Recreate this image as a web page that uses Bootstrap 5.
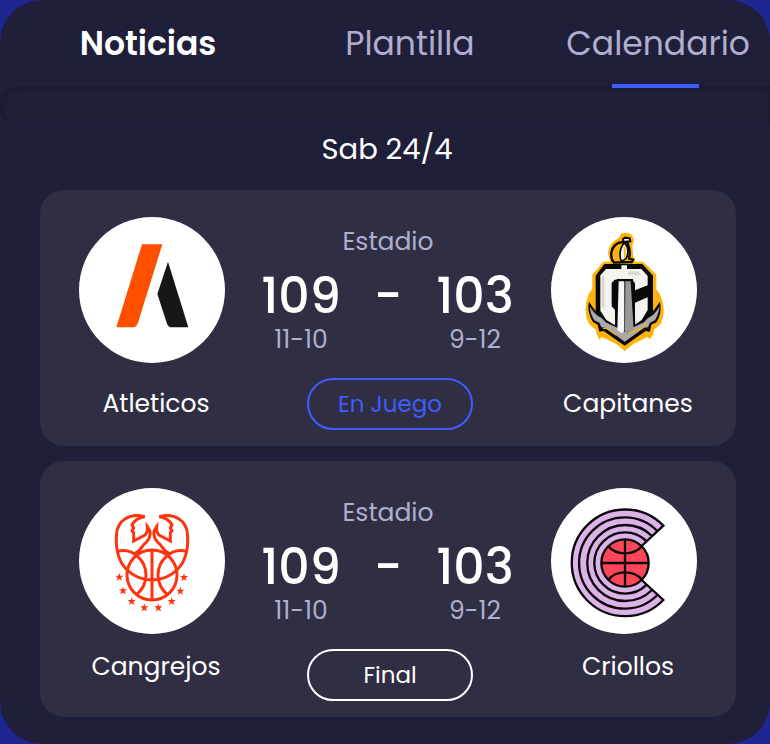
<!DOCTYPE html>
<html lang="es">
<head>
<meta charset="utf-8">
<meta name="viewport" content="width=device-width, initial-scale=1">
<title>Calendario</title>
<link rel="stylesheet" href="https://cdn.jsdelivr.net/npm/bootstrap@5.3.0/dist/css/bootstrap.min.css">
<style>
  body { background: #1f2692; font-family: Poppins, Inter, "Open Sans", sans-serif; color: #fff; }
  .panel { background: #201f3a; border-radius: 42px; min-height: 100vh; }
  .tabs { display: grid; grid-template-columns: 296fr 228fr 246fr; height: 86px; }
  .tab-link { position: relative; display: block; height: 88px; line-height: 87px; font-size: 33px; color: #b0aece; text-decoration: none; white-space: nowrap; }
  .tab-link:hover { color: #fff; }
  .tab-strong { font-weight: 600; color: #fff; }
  .tab-line::after { content: ""; position: absolute; left: 25%; right: 28%; bottom: 0; height: 4px; background: #3f5cff; }
  .tab-end { padding-right: 20px; }
  .strip { height: 40px; border-radius: 20px 0 0 20px; box-shadow: inset 0 3px 5px -1px #1a1930, inset 1px 0 3px #1c1b33; }
  .day { font-size: 29px; line-height: 40px; padding: 3px 0 21px 4px; }
  .games { display: grid; gap: 15px; padding: 0 34px 27px 40px; }
  .game { display: grid; grid-template-columns: 146px 1fr 146px; padding: 27px 39px 16px; background: #2f2e43; border-radius: 24px; }
  .crest { display: block; width: 146px; height: 146px; border-radius: 50%; background: #fff; }
  .team { font-size: 25px; line-height: 32px; margin-top: 25px; padding-left: 8px; white-space: nowrap; }
  .finished .team { margin-top: 17px; }
  .soft { color: #b0aece; font-size: 25px; line-height: 32px; }
  .venue { margin: 9px 0 10px; }
  .score { display: grid; grid-template-columns: repeat(3, 87px); justify-content: center; }
  .points { font-size: 49px; line-height: 56px; font-weight: 500; }
  .state { width: 166px; height: 52px; margin: 22px 0 0 4px; padding: 0; border: 2px solid #fff; border-radius: 26px; color: #fff; background: none; font-size: 23px; }
  .live { border-color: #3f5cff; color: #3f5cff; }
</style>
</head>
<body>
<div class="panel">
  <nav class="tabs text-center" aria-label="Secciones">
    <div class="d-flex justify-content-center"><a class="tab-link tab-strong" href="#noticias">Noticias</a></div>
    <div class="d-flex justify-content-center"><a class="tab-link" href="#plantilla">Plantilla</a></div>
    <div class="d-flex justify-content-end tab-end"><a class="tab-link tab-line" href="#calendario" aria-current="page">Calendario</a></div>
  </nav>
  <div class="strip"></div>
  <main id="calendario">
    <h1 class="day text-center fw-normal m-0">Sab 24/4</h1>
    <div class="games">
      <article class="game text-center">
        <div class="d-flex flex-column align-items-center">
          <svg class="crest" viewBox="13 21 438 438" role="img" aria-label="Atleticos">
            <path fill="#ff5000" d="M202 103H263L190 338Q185 352 173 352H125Z"/>
            <path fill="#171717" d="M280 155L341 352H292Q281 352 277 341L248 252Z"/>
          </svg>
          <div class="team">Atleticos</div>
        </div>
        <div class="d-flex flex-column align-items-center">
          <div class="soft venue">Estadio</div>
          <div class="score">
            <div class="points">109</div><div class="points">-</div><div class="points">103</div>
            <div class="soft">11-10</div><div></div><div class="soft">9-12</div>
          </div>
          <button type="button" class="state live">En Juego</button>
        </div>
        <div class="d-flex flex-column align-items-center">
          <svg class="crest" viewBox="18 21 438 438" role="img" aria-label="Capitanes">
            <path fill="#ffb30a" d="M229 70L249 68Q266 74 267 92L262 106L264 136L270 147L269 155H294L334 194V238L344 252Q361 288 354 320L347 342L327 359L325 373L315 388L307 381L264 403L239 423L215 403L171 381L163 389L155 373L153 360L133 343L125 326Q116 288 132 250L142 237V194L175 155H195L189 130Q191 98 221 85Z"/>
            <path fill="#080808" d="M178 162H292L324 197V304L345 275Q352 310 334 337L319 344L315 365L302 363L239 407L176 363L163 365L158 344L143 335Q125 303 132 275L152 304V197Z"/>
            <path fill="#ffb30a" stroke="#080808" stroke-width="7" d="M234 96Q205 98 199 128Q197 148 207 158L260 156L264 149L252 146Q258 121 247 98Z"/>
            <path fill="#f4f4ef" stroke="#080808" stroke-width="5" d="M237 99Q218 124 229 154Q252 146 248 118Q246 104 237 99Z"/>
            <path fill="#ffb30a" d="M237 106Q247 126 239 148Q235 124 237 106Z"/>
            <path fill="#f4f4ef" stroke="#080808" stroke-width="6" d="M234 87L240 83L254 85L256 94L236 96Z"/>
            <path fill="#f4f4ef" d="M229 166H246V182H229Z"/>
            <path fill="#f4f4ef" d="M183 177H289L308 198V226L270 241V220L261 209H209L200 219V289L210 300V346L184 330L166 302V196Z"/>
            <path fill="#f4f4ef" d="M270 278L308 262V300L290 330L270 344Z"/>
            <path fill="#d9d9d6" d="M249 184H280L290 196H249Z"/>
            <path fill="#d2d2cf" d="M171 202L178 194V296L171 289Z"/>
            <path fill="#080808" d="M215 207H264L272 363L239 388L209 363Z"/>
            <path fill="#aaa" d="M134 289Q149 315 171 325L182 337L218 354L240 366L260 354L297 337L308 325Q330 315 344 289Q341 314 330 331L315 338L309 352L298 353L239 395L181 353L169 352L163 338L148 331Q136 314 134 289Z"/>
            <path fill="#f6f6f6" d="M221 214H238V362L230 370L217 360Z"/>
            <path fill="#999" d="M241 214H257L266 358L246 374L240 364Z"/>
            <path fill="none" stroke="#ffb30a" stroke-width="4" d="M174 355L185 355L213 375M306 340Q285 359 252 371"/>
          </svg>
          <div class="team">Capitanes</div>
        </div>
      </article>

      <article class="game finished text-center">
        <div class="d-flex flex-column align-items-center">
          <svg class="crest" viewBox="13 17 438 438" role="img" aria-label="Cangrejos">
            <defs>
              <path id="star" fill="#ff330f" d="M0-12L3-4L12-4L5 2L8 11L0 6L-8 11L-5 2L-12-4L-3-4Z"/>
              <g id="claw">
                <path d="M160 265C133 242 123 205 125 160C127 113 166 91 210 103C190 106 179 113 172 128L177 137L172 145L177 151V176L211 158C219 151 219 142 218 132C230 147 229 164 215 180C199 190 201 207 179 214"/>
                <path d="M130 206C175 196 214 234 214 279Q213 313 187 336"/>
              </g>
            </defs>
            <g fill="none" stroke="#ff330f" stroke-width="9" stroke-linejoin="miter">
              <use href="#claw"/>
              <use href="#claw" transform="translate(464 0) scale(-1 1)"/>
              <circle cx="232" cy="278" r="75"/>
              <path d="M232 203V353M157 263Q190 293 232 293T307 263"/>
            </g>
            <use href="#star" x="134" y="284"/><use href="#star" x="145" y="325"/>
            <use href="#star" x="171" y="357"/><use href="#star" x="209" y="376"/>
            <use href="#star" x="251" y="376"/><use href="#star" x="291" y="357"/>
            <use href="#star" x="317" y="326"/><use href="#star" x="328" y="285"/>
          </svg>
          <div class="team">Cangrejos</div>
        </div>
        <div class="d-flex flex-column align-items-center">
          <div class="soft venue">Estadio</div>
          <div class="score">
            <div class="points">109</div><div class="points">-</div><div class="points">103</div>
            <div class="soft">11-10</div><div></div><div class="soft">9-12</div>
          </div>
          <button type="button" class="state">Final</button>
        </div>
        <div class="d-flex flex-column align-items-center">
          <svg class="crest" viewBox="18 17 438 438" role="img" aria-label="Criollos">
            <g stroke="#0b0809" stroke-width="7">
              <path fill="#dcb3e8" d="M355 130A160 160 0 1 0 355 353L290 293L240 242L290 191Z"/>
              <path fill="none" d="M337 146A137 137 0 1 0 337 338M321 161A114 114 0 1 0 321 323M305 177A92 92 0 1 0 305 307"/>
              <circle cx="240" cy="242" r="71" fill="#ff4658"/>
              <path fill="none" d="M240 171V313M169 242H311M190 192Q207 213 240 213T291 191M190 292Q207 270 240 270T291 292"/>
            </g>
          </svg>
          <div class="team">Criollos</div>
        </div>
      </article>
    </div>
  </main>
</div>
<script src="https://cdn.jsdelivr.net/npm/bootstrap@5.3.0/dist/js/bootstrap.bundle.min.js"></script>
</body>
</html>
